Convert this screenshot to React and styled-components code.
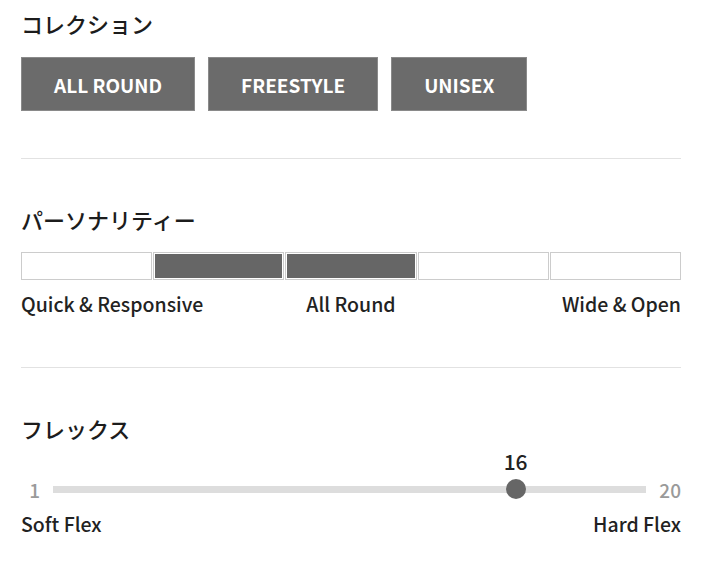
import React from 'react';
import styled, { createGlobalStyle } from 'styled-components';

const GlobalStyle = createGlobalStyle`
  body {
    margin: 0;
    background: #ffffff;
    font-family: "Noto Sans CJK JP", "Noto Sans", sans-serif;
    color: #222;
  }
`;

const collections = ['ALL ROUND', 'FREESTYLE', 'UNISEX'];
const personality = [false, true, true, false, false];
const flex = { min: 1, max: 20, value: 16 };

const App = () => {
  const ratio = (flex.value - flex.min) / (flex.max - flex.min);
  return (
    <>
      <GlobalStyle />
      <Page>
        <Section>
          <Title>コレクション</Title>
          <ButtonRow>
            {collections.map((c) => (
              <TagButton key={c}>{c}</TagButton>
            ))}
          </ButtonRow>
        </Section>

        <Divider />

        <Section>
          <Title>パーソナリティー</Title>
          <Bar>
            {personality.map((on, i) => (
              <Cell key={i} filled={on} />
            ))}
          </Bar>
          <ThreeLabels>
            <Label>Quick &amp; Responsive</Label>
            <Label align="center">All Round</Label>
            <Label align="right">Wide &amp; Open</Label>
          </ThreeLabels>
        </Section>

        <Divider spaced />

        <Section>
          <Title>フレックス</Title>
          <SliderRow>
            <EndValue start>{flex.min}</EndValue>
            <Track>
              <ThumbWrap style={{ left: `calc(10px + ${ratio} * (100% - 20px))` }}>
                <Current>{flex.value}</Current>
                <Thumb />
              </ThumbWrap>
            </Track>
            <EndValue>{flex.max}</EndValue>
          </SliderRow>
          <LabelRow>
            <Label>Soft Flex</Label>
            <Label>Hard Flex</Label>
          </LabelRow>
        </Section>
      </Page>
    </>
  );
};

const Page = styled.div`
  width: 660px;
  padding: 9px 0 0 21px;
  display: flex;
  flex-direction: column;
`;

const Section = styled.div`
  display: flex;
  flex-direction: column;
`;

const Title = styled.h2`
  margin: 0;
  font-family: "Noto Sans CJK JP", sans-serif;
  font-size: 22px;
  font-weight: 500;
  line-height: 28px;
  color: #1c1c1c;
`;

const ButtonRow = styled.div`
  display: flex;
  gap: 13px;
  margin-top: 20px;
`;

const TagButton = styled.button`
  height: 54px;
  padding: 0 32px;
  background: #6b6b6b;
  border: 1px solid #8a8a8a;
  color: #ffffff;
  font-family: "Noto Sans CJK JP", sans-serif;
  font-size: 19px;
  font-weight: 700;
  cursor: pointer;
`;

const Divider = styled.hr`
  margin: ${({ spaced }) => (spaced ? '50px 0 46px' : '47px 0 46px')};
  border: 0;
  height: 1px;
  background: #e2e2e2;
`;

const Bar = styled.div`
  display: grid;
  grid-template-columns: repeat(5, 1fr);
  gap: 1px;
  margin-top: 19px;
  height: 28px;
`;

const Cell = styled.div`
  border: 1px solid #cccccc;
  padding: 1px;
  background: ${({ filled }) => (filled ? '#666666' : '#ffffff')};
  background-clip: content-box;
`;

const ThreeLabels = styled.div`
  display: grid;
  grid-template-columns: 1fr auto 1fr;
  margin-top: 11px;
`;

const LabelRow = styled.div`
  display: flex;
  justify-content: space-between;
  margin-top: 11px;
`;

const Label = styled.span`
  font-size: 19.5px;
  font-weight: 500;
  line-height: 26px;
  color: #222;
  text-align: ${({ align }) => align || 'left'};
`;

const SliderRow = styled.div`
  display: flex;
  align-items: center;
  gap: 13px;
  margin-top: 36px;
  height: 22px;
`;

const EndValue = styled.span`
  font-size: 19px;
  font-weight: 500;
  color: #9a9a9a;
  width: ${({ start }) => (start ? '19px' : 'auto')};
  text-align: right;
`;

const Track = styled.div`
  position: relative;
  flex: 1;
  height: 7px;
  background: #dddddd;
`;

const ThumbWrap = styled.div`
  position: absolute;
  top: 50%;
  width: 0;
  height: 0;
`;

const Thumb = styled.div`
  position: absolute;
  left: -10px;
  top: -10px;
  width: 20px;
  height: 20px;
  border-radius: 50%;
  background: #666666;
`;

const Current = styled.span`
  position: absolute;
  bottom: 13px;
  left: 0;
  transform: translateX(-50%);
  font-size: 21px;
  font-weight: 500;
  color: #222;
`;

export default App;
